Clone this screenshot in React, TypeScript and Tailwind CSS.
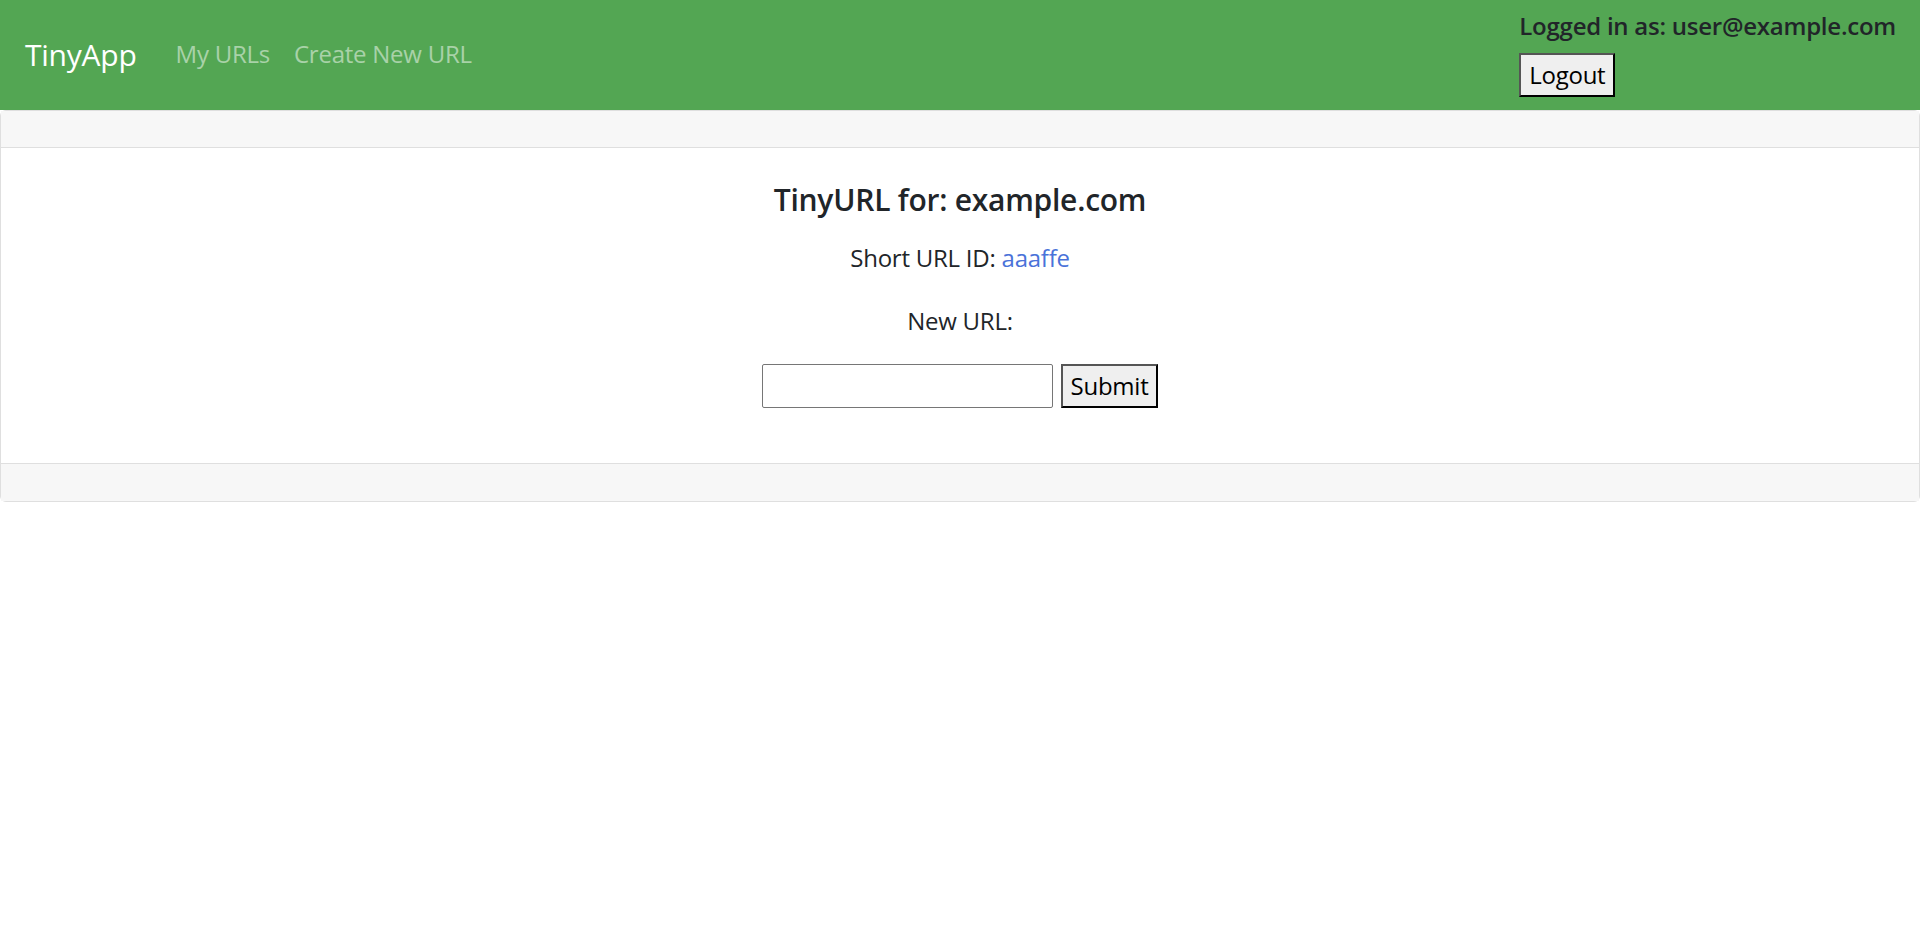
import { useState } from "react"

// ####
// #### Types
// ####

type NavLinkProps = {
  label: string
}

// ####
// #### Components
// ####

const NavLink = ({ label }: NavLinkProps) => (
  <a href="#" className="px-3 text-[rgba(255,255,255,0.5)] hover:text-[rgba(255,255,255,0.75)]">
    {label}
  </a>
)

const App = () => {
  const [url, setUrl] = useState("")

  return (
    <div className="min-h-screen bg-white text-[24px] leading-[1.5] text-[#212529] font-['Open_Sans',sans-serif] tracking-[-0.01em]">
      <nav className="flex items-center justify-between bg-[#53a653] pl-[25px] pr-[24px] pt-[12px] pb-[13px]">
        <div className="flex items-center">
          <a href="#" className="mr-[27px] text-[30px] leading-[1.5] text-white">
            TinyApp
          </a>
          <div className="flex">
            <NavLink label="My URLs" />
            <NavLink label="Create New URL" />
          </div>
        </div>
        <div className="flex flex-col items-start">
          <h6 className="mb-[12px] text-[24px] leading-[1.2] font-semibold">
            Logged in as: user@example.com
          </h6>
          <button className="h-[44px] w-[96px] border-2 border-t-[#555] border-l-[#555] border-b-black border-r-black bg-[#efefef] text-[24px] leading-none text-black">
            Logout
          </button>
        </div>
      </nav>

      <div className="flex flex-col rounded-[6px] border border-[#dfdfdf]">
        <div className="h-[37px] border-b border-[#dfdfdf] bg-[#f7f7f7]" />
        <div className="flex flex-col items-center px-[30px] pt-[34px] pb-[55px] text-center">
          <h5 className="mb-[22px] text-[30px] leading-[36px] font-semibold">
            TinyURL for: example.com
          </h5>
          <p className="mb-[27px] leading-[36px]">
            Short URL ID:{" "}
            <a href="#" className="text-[#4a72d9]">
              aaaffe
            </a>
          </p>
          <p className="mb-[25px] leading-[36px]">New URL:</p>
          <form className="flex items-center gap-[8px]" onSubmit={e => e.preventDefault()}>
            <input
              type="text"
              value={url}
              onChange={e => setUrl(e.target.value)}
              className="h-[44px] w-[291px] rounded-[2px] border border-[#767676] bg-white px-2 text-[24px] outline-none"
            />
            <button
              type="submit"
              className="h-[44px] w-[97px] border-2 border-t-[#555] border-l-[#555] border-b-black border-r-black bg-[#efefef] text-[24px] leading-none text-black"
            >
              Submit
            </button>
          </form>
        </div>
        <div className="h-[38px] border-t border-[#dfdfdf] bg-[#f7f7f7]" />
      </div>
    </div>
  )
}

export default App
